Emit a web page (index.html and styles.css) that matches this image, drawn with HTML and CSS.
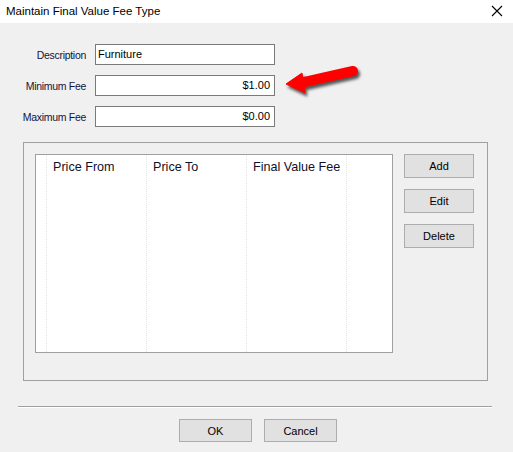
FILE: index.html
```html
<!DOCTYPE html>
<html lang="en">
<head>
<meta charset="UTF-8" />
<title>Maintain Final Value Fee Type</title>
<link rel="stylesheet" href="styles.css">
</head>
<body>
  <div class="dialog">
    <div class="titlebar">
      <span class="title">Maintain Final Value Fee Type</span>
      <svg class="close" width="12" height="12" viewBox="0 0 12 12">
        <path d="M1 1 L11 11 M11 1 L1 11" stroke="#000" stroke-width="1.1" fill="none" />
      </svg>
    </div>

    <div class="content">
      <div class="fields">
        <div class="field">
          <label>Description</label>
          <div class="input">Furniture</div>
        </div>
        <div class="field">
          <label>Minimum Fee</label>
          <div class="input num">$1.00</div>
        </div>
        <div class="field">
          <label>Maximum Fee</label>
          <div class="input num">$0.00</div>
        </div>
      </div>

      <div class="group">
        <div class="listview">
          <div class="col col-first"></div>
          <div class="col"><span class="head">Price From</span></div>
          <div class="col"><span class="head">Price To</span></div>
          <div class="col"><span class="head">Final Value Fee</span></div>
          <div class="col col-last"></div>
        </div>
        <div class="side-buttons">
          <button class="btn side">Add</button>
          <button class="btn side">Edit</button>
          <button class="btn side">Delete</button>
        </div>
      </div>

      <div class="separator"></div>

      <div class="footer">
        <button class="btn footer-btn">OK</button>
        <button class="btn footer-btn">Cancel</button>
      </div>
    </div>

    <!-- red call-out arrow -->
    <svg class="arrow" width="85" height="45" viewBox="0 0 85 45">
      <g fill="#f00" stroke="#f00">
        <line x1="20" y1="23" x2="73" y2="11" stroke-width="10" stroke-linecap="round" />
        <polygon points="6,24 22,13 25,33" stroke-width="1" stroke-linejoin="round" />
      </g>
    </svg>
  </div>
</body>
</html>
```

FILE: styles.css
```css
* {
  box-sizing: border-box;
  margin: 0;
  padding: 0;
}
body {
  background: #f0f0f0;
  font-family: 'Liberation Sans', Arial, sans-serif;
  font-size: 11px;
  color: #000;
}
.dialog {
  position: relative;
  width: 513px;
  height: 452px;
  background: #f0f0f0;
}
.titlebar {
  height: 23px;
  background: #fff;
  display: flex;
  align-items: center;
  justify-content: space-between;
  padding: 0 10px 1px 6px;
}
.title {
  font-size: 11.5px;
  color: #000;
}
.close {
  display: block;
}
.content {
  padding-top: 21px;
}
.fields {
  display: flex;
  flex-direction: column;
  gap: 10px;
}
.field {
  display: flex;
  align-items: center;
}
.field label {
  width: 87px;
  text-align: right;
  padding-right: 1px;
  font-size: 10.5px;
  letter-spacing: -0.3px;
  color: #14143a;
}
.input {
  margin-left: 8px;
  width: 180px;
  height: 21px;
  background: #fff;
  border: 1px solid #7a7a7a;
  padding: 0 4px 0 2px;
  line-height: 19px;
}
.input.num {
  text-align: right;
}
.group {
  margin: 15px 0 0 23px;
  width: 465px;
  height: 239px;
  border: 1px solid #a0a0a0;
  padding: 11px 0 0 11px;
  display: flex;
  align-items: flex-start;
  gap: 11px;
}
.listview {
  width: 358px;
  height: 199px;
  background: #fff;
  border: 1px solid #a0a0a0;
  display: flex;
}
.col {
  width: 100px;
  border-right: 1px dotted #e3e3e3;
  padding: 5px 0 0 6px;
}
.col-first {
  width: 11px;
  padding: 0;
}
.col-last {
  flex: 1;
  border-right: none;
}
.head {
  font-size: 12.6px;
  color: #10102a;
}
.side-buttons {
  display: flex;
  flex-direction: column;
  gap: 11px;
}
.btn {
  font-family: 'Liberation Sans', Arial, sans-serif;
  font-size: 11px;
  color: #000;
  background: #e1e1e1;
  border: 1px solid #adadad;
}
.side {
  width: 70px;
  height: 24px;
}
.separator {
  margin: 25px 21px 0 18px;
  height: 2px;
  border-top: 1px solid #a0a0a0;
  border-bottom: 1px solid #fff;
}
.footer {
  display: flex;
  justify-content: center;
  gap: 12px;
  margin-top: 11px;
  padding-left: 3px;
}
.footer-btn {
  width: 73px;
  height: 23px;
}
.arrow {
  position: absolute;
  left: 280px;
  top: 60px;
  filter: drop-shadow(2px 3px 1.5px rgba(0, 0, 0, 0.65));
}
```
